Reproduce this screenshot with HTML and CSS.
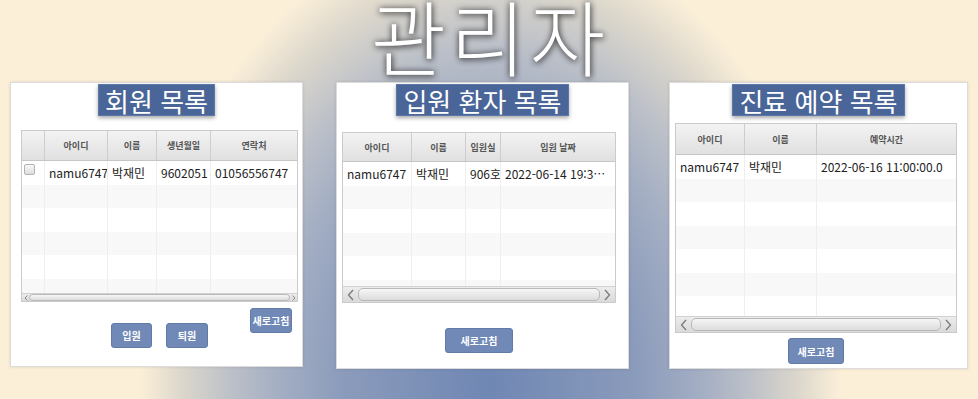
FILE: index.html
```html
<!DOCTYPE html>
<html lang="ko">
<head>
  <meta charset="UTF-8">
  <meta name="viewport" content="width=device-width, initial-scale=1.0">
  <title>관리자</title>
  <link rel="stylesheet" href="styles.css">
</head>
<body>
  <h1 class="title">관리자</h1>

  <div class="boards">
    <section class="board board-members">
      <h2 class="board-title">회원 목록</h2>
      <div class="grid grid-members">
        <div class="grid-head">
          <span></span><span>아이디</span><span>이름</span><span>생년월일</span><span>연락처</span>
        </div>
        <div class="grid-body">
          <div class="grid-row"><span><i class="check"></i></span><span>namu6747</span><span>박재민</span><span>9602051</span><span>01056556747</span></div>
          <div class="grid-row"><span></span><span></span><span></span><span></span><span></span></div>
          <div class="grid-row"><span></span><span></span><span></span><span></span><span></span></div>
          <div class="grid-row"><span></span><span></span><span></span><span></span><span></span></div>
          <div class="grid-row"><span></span><span></span><span></span><span></span><span></span></div>
          <div class="grid-row"><span></span><span></span><span></span><span></span><span></span></div>
        </div>
        <div class="hscroll hscroll-thin">
          <span class="arrow"><svg width="4" height="6" viewBox="0 0 4 6"><path d="M3.5 .5 1 3l2.5 2.5" fill="none" stroke="#8a8a8a"/></svg></span>
          <span class="thumb"></span>
          <span class="arrow"><svg width="4" height="6" viewBox="0 0 4 6"><path d="M.5 .5 3 3 .5 5.5" fill="none" stroke="#8a8a8a"/></svg></span>
        </div>
      </div>
      <div class="actions actions-members">
        <div class="btn-group">
          <button class="btn btn-join">입원</button>
          <button class="btn btn-leave">퇴원</button>
        </div>
        <button class="btn btn-refresh-sm">새로고침</button>
      </div>
    </section>

    <section class="board board-inpatients">
      <h2 class="board-title">입원 환자 목록</h2>
      <div class="grid grid-inpatients">
        <div class="grid-head">
          <span>아이디</span><span>이름</span><span>입원실</span><span>입원 날짜</span>
        </div>
        <div class="grid-body">
          <div class="grid-row"><span>namu6747</span><span>박재민</span><span>906호</span><span>2022-06-14 19:36:30.0</span></div>
          <div class="grid-row"><span></span><span></span><span></span><span></span></div>
          <div class="grid-row"><span></span><span></span><span></span><span></span></div>
          <div class="grid-row"><span></span><span></span><span></span><span></span></div>
          <div class="grid-row"><span></span><span></span><span></span><span></span></div>
          <div class="grid-row"><span></span><span></span><span></span><span></span></div>
        </div>
        <div class="hscroll">
          <span class="arrow"><svg width="7" height="12" viewBox="0 0 7 12"><path d="M6 1 1.5 6 6 11" fill="none" stroke="#7a7a7a" stroke-width="1.3"/></svg></span>
          <span class="thumb"></span>
          <span class="arrow"><svg width="7" height="12" viewBox="0 0 7 12"><path d="M1 1l4.5 5L1 11" fill="none" stroke="#7a7a7a" stroke-width="1.3"/></svg></span>
        </div>
      </div>
      <div class="actions actions-inpatients">
        <button class="btn btn-refresh-md">새로고침</button>
      </div>
    </section>

    <section class="board board-reserves">
      <h2 class="board-title">진료 예약 목록</h2>
      <div class="grid grid-reserves">
        <div class="grid-head">
          <span>아이디</span><span>이름</span><span>예약시간</span>
        </div>
        <div class="grid-body">
          <div class="grid-row"><span>namu6747</span><span>박재민</span><span>2022-06-16 11:00:00.0</span></div>
          <div class="grid-row"><span></span><span></span><span></span></div>
          <div class="grid-row"><span></span><span></span><span></span></div>
          <div class="grid-row"><span></span><span></span><span></span></div>
          <div class="grid-row"><span></span><span></span><span></span></div>
          <div class="grid-row"><span></span><span></span><span></span></div>
          <div class="grid-row"><span></span><span></span><span></span></div>
        </div>
        <div class="hscroll">
          <span class="arrow"><svg width="7" height="12" viewBox="0 0 7 12"><path d="M6 1 1.5 6 6 11" fill="none" stroke="#7a7a7a" stroke-width="1.3"/></svg></span>
          <span class="thumb"></span>
          <span class="arrow"><svg width="7" height="12" viewBox="0 0 7 12"><path d="M1 1l4.5 5L1 11" fill="none" stroke="#7a7a7a" stroke-width="1.3"/></svg></span>
        </div>
      </div>
      <div class="actions actions-reserves">
        <button class="btn btn-refresh-lg">새로고침</button>
      </div>
    </section>
  </div>
</body>
</html>
```

FILE: styles.css
```css
* {
  box-sizing: border-box;
}
body {
  margin: 0;
  height: 399px;
  overflow: hidden;
  font-family: "Noto Sans CJK KR", "Noto Sans", sans-serif;
  background-color: #fbefd8;
  background-image: radial-gradient(ellipse 350px 460px at 490px 385px,
    #6f87b4 0%, #8b9bbb 42%, #a3aec3 60%, #bcc0c8 74%, #dcd7cc 88%, #fbefd8 100%);
}
.title {
  margin: 0 0 12px;
  padding-left: 2px;
  text-align: center;
  font-size: 82px;
  font-weight: 300;
  letter-spacing: 4px;
  line-height: 70px;
  color: #fff;
  text-shadow: 0 0 6px rgba(40,40,40,0.7), 1px 2px 6px rgba(0,0,0,0.45);
}
.boards {
  display: flex;
  align-items: flex-start;
}
.board {
  display: flex;
  flex-direction: column;
  background: #fff;
  border: 1px solid #dcdcdc;
  box-shadow: 0 0 3px rgba(0,0,0,0.12);
}
.board-members {
  margin-left: 10px;
  width: 293px;
  height: 285px;
}
.board-inpatients {
  margin-left: 33px;
  width: 293px;
  height: 287px;
}
.board-reserves {
  margin-left: 40px;
  width: 299px;
  height: 287px;
}
.board-title {
  align-self: center;
  margin: 1px 0 0;
  padding: 0 6px;
  height: 32px;
  line-height: 32px;
  font-size: 26px;
  font-weight: 400;
  color: #fff;
  white-space: nowrap;
  background: #4a6597;
  border: 1px solid #5d77a6;
  box-shadow: 0 2px 4px rgba(0,0,0,0.35);
}

/* tables */
.grid {
  display: flex;
  flex-direction: column;
  border: 1px solid #cbcbcb;
  background: #fff;
}
.grid-head,
.grid-row {
  display: grid;
}
.grid-head {
  background: linear-gradient(#f3f3f3, #e0e0e0);
  border-bottom: 1px solid #c6c6c6;
}
.grid-head span {
  display: flex;
  align-items: center;
  justify-content: center;
  border-right: 1px solid #cdcdcd;
  font-size: 9px;
  font-weight: 700;
  color: #555;
}
.grid-head span:last-child,
.grid-row span:last-child {
  border-right: 0;
}
.grid-body {
  overflow: hidden;
}
.grid-row {
  height: 23.5px;
}
.grid-row:nth-child(even) {
  background: #f8f8f8;
}
.grid-row span {
  display: flex;
  align-items: center;
  padding: 0 4px;
  border-right: 1px solid #eeeeee;
  font-size: 12px;
  color: #222;
  white-space: nowrap;
  overflow: hidden;
}
.grid-row span:last-child {
  display: block;
  line-height: 23.5px;
  text-overflow: ellipsis;
}
.check {
  align-self: flex-start;
  margin: 3px 0 0 -2px;
  width: 11px;
  height: 11px;
  border: 1px solid #b3b3b3;
  border-radius: 2px;
  background: linear-gradient(#f8f8f8, #dedede);
}

.grid-members {
  margin: 14px 4px 0 10px;
}
.grid-members .grid-head,
.grid-members .grid-row {
  grid-template-columns: 23px 63px 49px 54px 1fr;
}
.grid-members .grid-head {
  height: 30px;
}
.grid-members .grid-body {
  height: 132px;
}

.grid-inpatients {
  margin: 16px 12px 0 5px;
}
.grid-inpatients .grid-head,
.grid-inpatients .grid-row {
  grid-template-columns: 69px 54px 35px 1fr;
}
.grid-inpatients .grid-head {
  height: 29px;
}
.grid-inpatients .grid-body {
  height: 124px;
}

.grid-reserves {
  margin: 7px 10px 0 5px;
}
.grid-reserves .grid-head,
.grid-reserves .grid-row {
  grid-template-columns: 69px 72px 1fr;
}
.grid-reserves .grid-head {
  height: 31px;
}
.grid-reserves .grid-body {
  height: 161px;
}

/* scroll bars */
.hscroll {
  display: flex;
  align-items: center;
  height: 16px;
  background: linear-gradient(#ececec, #dadada);
  border-top: 1px solid #d2d2d2;
}
.hscroll .arrow {
  display: flex;
  justify-content: center;
  width: 15px;
}
.hscroll .thumb {
  flex: 1;
  height: 13px;
  border: 1px solid #b9b9b9;
  border-radius: 5px;
  background: linear-gradient(#f6f6f6, #dcdcdc);
}
.hscroll-thin {
  height: 8px;
}
.hscroll-thin .arrow {
  width: 7px;
}
.hscroll-thin .thumb {
  height: 7px;
  border-radius: 4px;
}

/* buttons */
.actions {
  display: flex;
  justify-content: center;
}
.actions-members {
  display: grid;
  grid-template-columns: 1fr auto 1fr;
  margin: 0 4px 0 10px;
}
.btn-group {
  grid-column: 2;
  display: flex;
  gap: 14px;
  margin-top: 21px;
}
.actions-inpatients {
  margin: 25px 12px 0 5px;
}
.actions-reserves {
  margin: 5px 10px 0 5px;
}
.btn {
  height: 25px;
  padding: 0;
  border: 1px solid #617aa6;
  border-radius: 3px;
  background: #7189b6;
  color: #fff;
  font-family: "Noto Sans CJK KR", sans-serif;
  font-size: 10px;
  font-weight: 700;
}
.btn-join {
  width: 41px;
}
.btn-leave {
  width: 42px;
}
.btn-refresh-sm {
  grid-column: 3;
  justify-self: end;
  align-self: start;
  margin: 6px 6px 0 0;
  width: 42px;
}
.btn-refresh-md {
  width: 68px;
}
.btn-refresh-lg {
  width: 56px;
  height: 26px;
}
```
